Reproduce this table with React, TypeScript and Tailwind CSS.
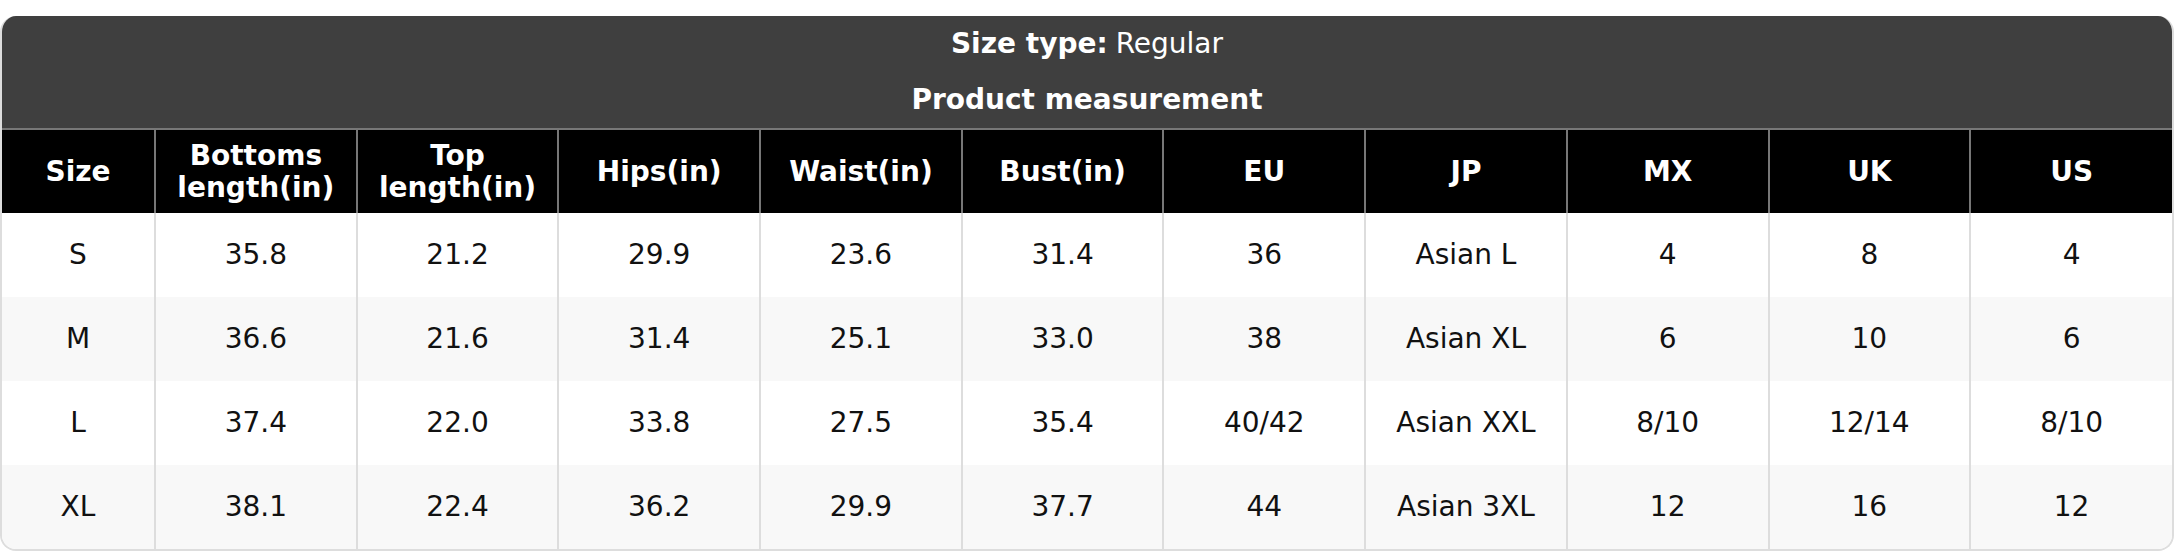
import React from 'react';

const headers = ['Size', 'Bottoms length(in)', 'Top length(in)', 'Hips(in)', 'Waist(in)', 'Bust(in)', 'EU', 'JP', 'MX', 'UK', 'US'];

const rows: string[][] = [
  ['S', '35.8', '21.2', '29.9', '23.6', '31.4', '36', 'Asian L', '4', '8', '4'],
  ['M', '36.6', '21.6', '31.4', '25.1', '33.0', '38', 'Asian XL', '6', '10', '6'],
  ['L', '37.4', '22.0', '33.8', '27.5', '35.4', '40/42', 'Asian XXL', '8/10', '12/14', '8/10'],
  ['XL', '38.1', '22.4', '36.2', '29.9', '37.7', '44', 'Asian 3XL', '12', '16', '12'],
];

export default function App() {
  return (
    <div className="bg-white pt-4 font-['DejaVu_Sans',sans-serif]">
      <div className="overflow-hidden rounded-2xl border-2 border-t-0 border-[#dddddd]">
        <div className="bg-[#3f3f3f] text-white text-[28px] leading-[32px]">
          <div className="h-14 flex items-center justify-center">
            <span className="font-bold">Size type:</span>
            <span className="ml-2">Regular</span>
          </div>
          <div className="h-14 flex items-center justify-center font-bold">Product measurement</div>
        </div>
        <table className="w-full table-fixed border-collapse text-[28px] leading-[32px]">
          <colgroup>
            <col className="w-[153px]" />
          </colgroup>
          <thead>
            <tr className="bg-black text-white border-t-2 border-[#777777]">
              {headers.map((h, i) => (
                <th
                  key={i}
                  className={`h-[84px] px-2 font-bold text-center align-middle ${i > 0 ? 'border-l-2 border-[#777777]' : ''}`}
                >
                  {h}
                </th>
              ))}
            </tr>
          </thead>
          <tbody>
            {rows.map((r, ri) => (
              <tr key={ri} className={ri % 2 === 1 ? 'bg-[#f8f8f8]' : 'bg-white'}>
                {r.map((c, ci) => (
                  <td
                    key={ci}
                    className={`h-[84px] px-2 text-center align-middle text-[#111111] ${ci > 0 ? 'border-l-2 border-[#dddddd]' : ''}`}
                  >
                    {c}
                  </td>
                ))}
              </tr>
            ))}
          </tbody>
        </table>
      </div>
    </div>
  );
}
